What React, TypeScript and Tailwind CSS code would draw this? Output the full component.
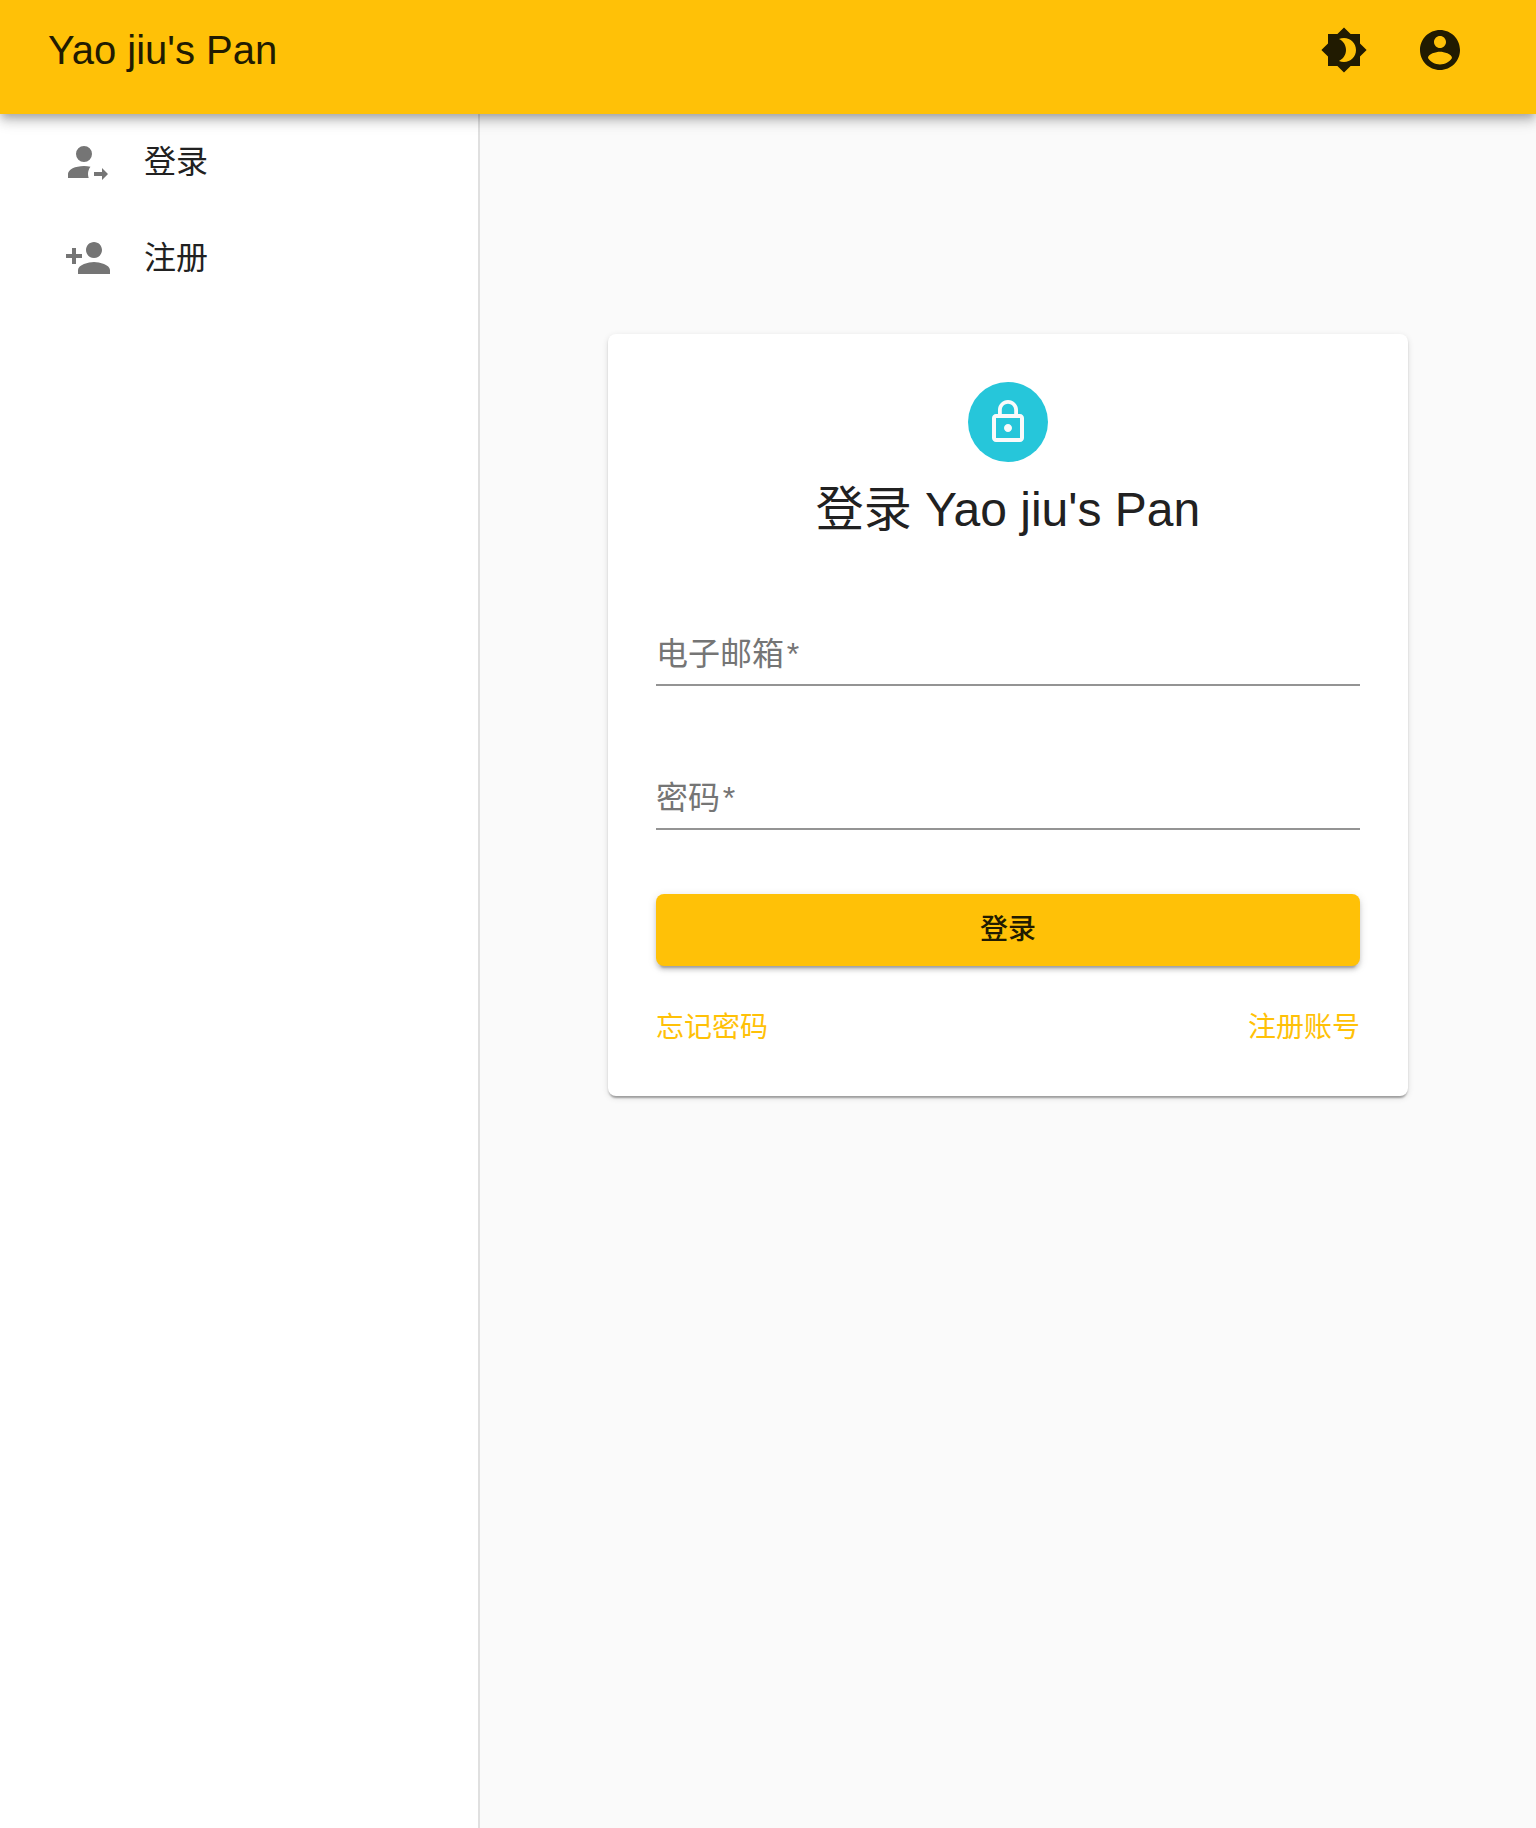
import type { ReactNode } from "react";

type IconProps = { d: string; className?: string };

const ICONS = {
  brightness:
    "M20 8.69V4h-4.69L12 .69 8.69 4H4v4.69L.69 12 4 15.31V20h4.69L12 23.31 15.31 20H20v-4.69L23.31 12 20 8.69zM12 18c-.89 0-1.74-.2-2.5-.55C11.56 16.5 13 14.42 13 12s-1.44-4.5-3.5-5.45C10.26 6.2 11.11 6 12 6c3.31 0 6 2.69 6 6s-2.69 6-6 6z",
  account:
    "M12 2C6.48 2 2 6.48 2 12s4.48 10 10 10 10-4.48 10-10S17.52 2 12 2zm0 3c1.66 0 3 1.34 3 3s-1.34 3-3 3-3-1.34-3-3 1.34-3 3-3zm0 14.2c-2.5 0-4.71-1.28-6-3.22.03-1.99 4-3.08 6-3.08 1.99 0 5.97 1.09 6 3.08-1.29 1.94-3.5 3.22-6 3.22z",
  login:
    "M19,21V19H15V17H19V15L22,18L19,21M10,4A4,4 0 0,1 14,8A4,4 0 0,1 10,12A4,4 0 0,1 6,8A4,4 0 0,1 10,4M10,14C11.15,14 12.25,14.12 13.24,14.34C12.46,15.35 12,16.62 12,18C12,18.7 12.12,19.37 12.34,20H2V18C2,15.79 5.58,14 10,14Z",
  register:
    "M15 12c2.21 0 4-1.79 4-4s-1.79-4-4-4-4 1.79-4 4 1.79 4 4 4zm-9-2V7H4v3H1v2h3v3h2v-3h3v-2H6zm9 4c-2.67 0-8 1.34-8 4v2h16v-2c0-2.66-5.33-4-8-4z",
  lock: "M12 17c1.1 0 2-.9 2-2s-.9-2-2-2-2 .9-2 2 .9 2 2 2zm6-9h-1V6c0-2.76-2.24-5-5-5S7 3.24 7 6v2H6c-1.1 0-2 .9-2 2v10c0 1.1.9 2 2 2h12c1.1 0 2-.9 2-2V10c0-1.1-.9-2-2-2zM8.9 6c0-1.71 1.39-3.1 3.1-3.1s3.1 1.39 3.1 3.1v2H8.9V6zM18 20H6V10h12v10z",
};

function Icon({ d, className = "" }: IconProps) {
  return (
    <svg viewBox="0 0 24 24" fill="currentColor" aria-hidden="true" className={`size-12 shrink-0 ${className}`}>
      <path d={d} />
    </svg>
  );
}

function IconButton({ label, children }: { label: string; children: ReactNode }) {
  return (
    <button type="button" aria-label={label} className="rounded-full p-6">
      {children}
    </button>
  );
}

function NavItem({ icon, label }: { icon: string; label: string }) {
  return (
    <li>
      <a href="#" className="flex h-24 items-center gap-8 px-16 text-[32px] leading-12">
        <Icon d={icon} className="text-[#757575]" />
        {label}
      </a>
    </li>
  );
}

function Field({ id, label, type }: { id: string; label: string; type: string }) {
  return (
    <div className="grid pt-8">
      <label
        htmlFor={id}
        className="pointer-events-none col-start-1 row-start-1 self-center text-[32px] leading-10 text-[#757575]"
      >
        {label}
        <span aria-hidden="true">{"\u200a*"}</span>
      </label>
      <input
        id={id}
        type={type}
        required
        className="col-start-1 row-start-1 h-16 w-full border-b-2 border-[#949494] bg-transparent text-[32px] outline-none"
      />
    </div>
  );
}

export default function App() {
  return (
    <div className="flex min-h-screen flex-col bg-[#fafafa] font-['Liberation_Sans','Noto_Sans_CJK_SC',sans-serif] text-[#212121]">
      <header className="z-10 bg-[#ffc107] pt-0.5 pb-4 text-[#211b01] shadow-[0_4px_8px_-2px_rgba(0,0,0,0.2),0_8px_10px_0_rgba(0,0,0,0.14),0_2px_20px_0_rgba(0,0,0,0.12)]">
        <div className="flex h-24 items-center justify-between px-12">
          <h1 className="text-[40px] leading-16">Yao jiu's Pan</h1>
          <div className="flex">
            <IconButton label="切换主题">
              <Icon d={ICONS.brightness} />
            </IconButton>
            <IconButton label="账号">
              <Icon d={ICONS.account} />
            </IconButton>
          </div>
        </div>
      </header>

      <div className="flex flex-1">
        <nav className="w-[480px] shrink-0 border-r-2 border-[#e0e0e0] bg-white">
          <ul>
            <NavItem icon={ICONS.login} label="登录" />
            <NavItem icon={ICONS.register} label="注册" />
          </ul>
        </nav>

        <main className="flex flex-1 items-start justify-center pt-[220px]">
          <section className="flex w-full max-w-[800px] flex-col rounded-lg bg-white p-12 shadow-[0_4px_2px_-2px_rgba(0,0,0,0.2),0_2px_2px_0_rgba(0,0,0,0.14),0_2px_6px_0_rgba(0,0,0,0.12)]">
            <div className="flex size-20 items-center justify-center self-center rounded-full bg-[#26c6da] text-[#fafafa]">
              <Icon d={ICONS.lock} />
            </div>
            <h2 className="mt-4 text-center text-[48px] leading-16">登录 Yao jiu's Pan</h2>

            <form className="mt-12 flex flex-col gap-12">
              <Field id="email" label="电子邮箱" type="email" />
              <Field id="password" label="密码" type="password" />
              <button
                type="submit"
                className="mt-4 h-18 rounded-lg bg-[#ffc107] text-[28px] font-medium text-[#211b01] shadow-[0_6px_2px_-4px_rgba(0,0,0,0.2),0_4px_4px_0_rgba(0,0,0,0.14),0_2px_10px_0_rgba(0,0,0,0.12)]"
              >
                登录
              </button>
            </form>

            <div className="mt-[42px] flex justify-between text-[28px] leading-10 text-[#ffc107]">
              <a href="#">忘记密码</a>
              <a href="#">注册账号</a>
            </div>
          </section>
        </main>
      </div>
    </div>
  );
}
